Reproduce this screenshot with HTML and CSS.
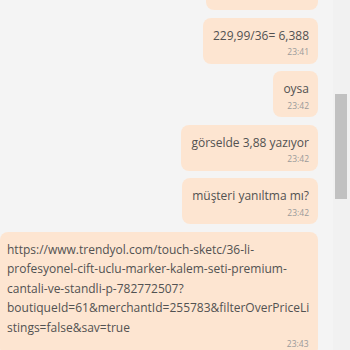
FILE: index.html
```html
<!DOCTYPE html>
<html lang="tr">
<head>
<meta charset="utf-8">
<link rel="stylesheet" href="styles.css">
</head>
<body>
<div class="app">
  <div class="chat">
    <div class="list">
      <div class="msg out clipped"></div>
      <div class="msg out">
        <div class="text">229,99/36= 6,388</div>
        <div class="time">23:41</div>
      </div>
      <div class="msg out">
        <div class="text">oysa</div>
        <div class="time">23:42</div>
      </div>
      <div class="msg out">
        <div class="text">görselde 3,88 yazıyor</div>
        <div class="time">23:42</div>
      </div>
      <div class="msg out">
        <div class="text">müşteri yanıltma mı?</div>
        <div class="time">23:42</div>
      </div>
      <div class="msg in">
        <div class="text link">https://www.trendyol.com/touch-sketc/36-li-profesyonel-cift-uclu-marker-kalem-seti-premium-cantali-ve-standli-p-782772507?boutiqueId=61&amp;merchantId=255783&amp;filterOverPriceListings=false&amp;sav=true</div>
        <div class="time">23:43</div>
      </div>
    </div>
  </div>
  <div class="scrollbar">
    <div class="thumb"></div>
  </div>
</div>
</body>
</html>
```
FILE: styles.css
```css
html, body {
  margin: 0;
  padding: 0;
}
body {
  background: #f4f4f4;
  font-family: "Open Sans", "Noto Sans", sans-serif;
  color: #525252;
}
.app {
  display: flex;
  height: 350px;
  overflow: hidden;
}
.chat {
  flex: 1;
  overflow: hidden;
  padding-right: 15px;
}
.list {
  display: flex;
  flex-direction: column;
  align-items: flex-end;
  gap: 7.5px;
  margin-top: -38px;
}
.msg {
  background: #fde5d1;
  border-radius: 8px;
  padding: 8px 9px 5px 10px;
  box-sizing: border-box;
}
.msg.clipped {
  width: 112px;
  height: 48px;
}
.msg.in {
  align-self: stretch;
  padding-left: 7px;
  padding-right: 7.5px;
}
.text {
  font-size: 12px;
  line-height: 19.5px;
  white-space: nowrap;
}
.text.link {
  white-space: normal;
  overflow-wrap: break-word;
}
.time {
  font-size: 8.5px;
  line-height: 13.5px;
  color: #9a9a9a;
  text-align: right;
}
.msg.in .time {
  padding-right: 2px;
}
.scrollbar {
  width: 17px;
  background: #f1f1f1;
  padding-top: 94px;
  box-sizing: border-box;
}
.thumb {
  width: 12px;
  height: 105px;
  margin-left: 2px;
  background: #c1c1c1;
}
```
